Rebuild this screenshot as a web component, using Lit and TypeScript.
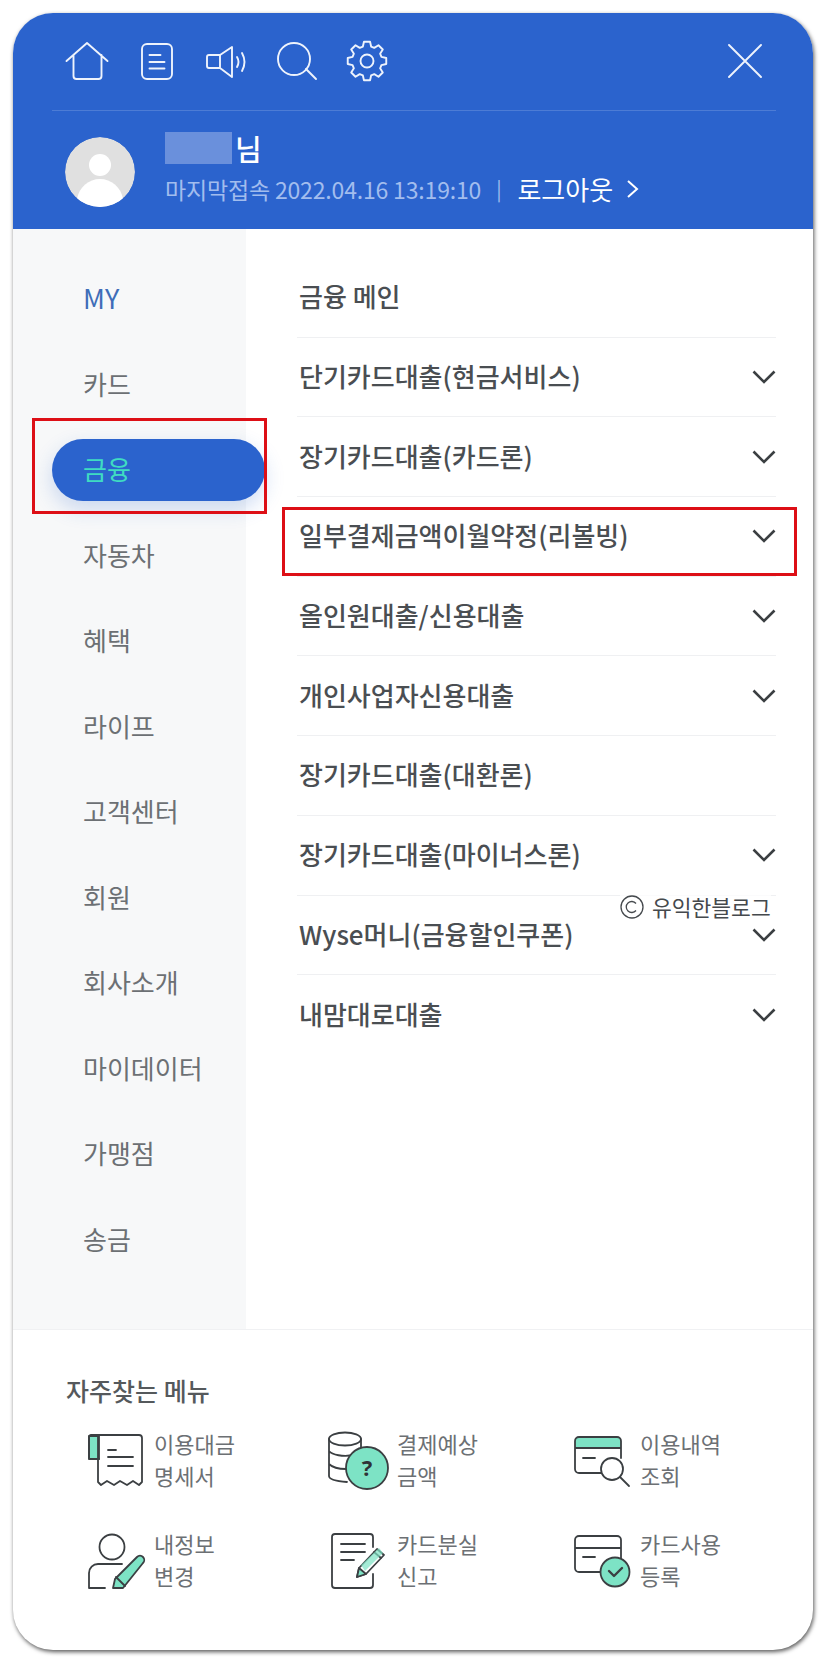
import { LitElement, html, css, svg } from "lit";
import { customElement } from "lit/decorators.js";

const gearPath = (() => {
  const cx = 22, cy = 22, pts: string[] = [];
  for (let i = 0; i < 8; i++) {
    const a = (i * 45 - 90) * Math.PI / 180;
    const p = (r: number, d: number) => {
      const t = a + d * Math.PI / 180;
      return `${(cx + r * Math.cos(t)).toFixed(2)} ${(cy + r * Math.sin(t)).toFixed(2)}`;
    };
    pts.push(p(15, -16), p(19.5, -9), p(19.5, 9), p(15, 16));
  }
  return "M" + pts.join("L") + "Z";
})();

const GREEN = "#7de3c5";

const quick = [
  { l: ["이용대금", "명세서"], i: svg`
    <rect x="1" y="7" width="10" height="23" fill="${GREEN}"/>
    <path d="M11 30H2a1 1 0 0 1-1-1V8a2 2 0 0 1 2-2h48a3 3 0 0 1 3 3v44l-3 3-6-4-6 4-7-4-6 4-7-4-6 4-3-3V8a2 2 0 0 0-2-2"/>
    <path d="M20 21h8M20 28h25M20 37h25"/>` },
  { l: ["결제예상", "금액"], i: svg`
    <ellipse cx="14" cy="10" rx="16" ry="6.5"/>
    <path d="M-2 10v37c0 3 5 5 18 6M30 10v14M-2 22c3 4 14 6 25 4M-2 35c3 3 10 5 17 5"/>
    <circle cx="36" cy="39" r="21" fill="${GREEN}"/>
    <text x="36" y="47" text-anchor="middle" class="q">?</text>` },
  { l: ["이용내역", "조회"], i: svg`
    <path d="M1 19V12a4 4 0 0 1 4-4h38a4 4 0 0 1 4 4v7z" fill="${GREEN}" stroke="none"/>
    <path d="M27 44H5a4 4 0 0 1-4-4V12a4 4 0 0 1 4-4h38a4 4 0 0 1 4 4v17M1 19h46M9 29h12"/>
    <circle cx="38" cy="40" r="11" fill="#fff"/>
    <path d="M46 48l9 9"/>` },
  { l: ["내정보", "변경"], i: svg`
    <circle cx="24" cy="18" r="12.5"/>
    <path d="M17 59H1V44a9 9 0 0 1 9-9h24"/>
    <path d="M27 50L49 28a4 4 0 0 1 6 6L35 59H25z" fill="${GREEN}"/>
    <path d="M28 48l9 9"/>` },
  { l: ["카드분실", "신고"], i: svg`
    <path d="M42 18V8a3 3 0 0 0-3-3H4a3 3 0 0 0-3 3v48a3 3 0 0 0 3 3h35a3 3 0 0 0 3-3V45"/>
    <path d="M10 15h24M10 23h24M10 31h13"/>
    <path d="M26 48l2-9 18-19 7 6-18 19z" fill="#fff"/>
    <path d="M43 23l7 6" />
    <path d="M28 39l7 6L26 48z" fill="${GREEN}"/>
    <path d="M30 36l18-17 4 5-18 18z" fill="${GREEN}" stroke="none" opacity=".7"/>` },
  { l: ["카드사용", "등록"], i: svg`
    <path d="M27 43H5a4 4 0 0 1-4-4V11a4 4 0 0 1 4-4h38a4 4 0 0 1 4 4v19M1 19h46M9 28h12"/>
    <circle cx="41" cy="43" r="14.5" fill="${GREEN}"/>
    <path d="M35 42l5 5 8-8" stroke-width="2.4"/>` },
];

const side = ["MY", "카드", "금융", "자동차", "혜택", "라이프", "고객센터", "회원", "회사소개", "마이데이터", "가맹점", "송금"];
const rows: [string, boolean][] = [
  ["금융 메인", false],
  ["단기카드대출(현금서비스)", true],
  ["장기카드대출(카드론)", true],
  ["일부결제금액이월약정(리볼빙)", true],
  ["올인원대출/신용대출", true],
  ["개인사업자신용대출", true],
  ["장기카드대출(대환론)", false],
  ["장기카드대출(마이너스론)", true],
  ["Wyse머니(금융할인쿠폰)", true],
  ["내맘대로대출", true],
];

@customElement("app-root")
export class AppRoot extends LitElement {
  static styles = css`
    :host { display: block; position: relative; width: 828px; height: 1665px; background: #fff; box-sizing: border-box; padding: 13px 15px 15px 13px;
      font-family: "Noto Sans CJK KR", "Noto Sans", sans-serif; overflow: hidden; }
    .card { width: 800px; height: 1637px; border-radius: 40px; background: #fff; overflow: hidden; display: flex; flex-direction: column;
      box-shadow: 1px 2px 4px rgba(0,0,0,.65); }
    .head { height: 216px; flex: none; background: #2b63cd; box-sizing: border-box; padding: 26px 37px 0 39px; color: #fff; }
    .tools { display: flex; align-items: center; height: 44px; padding-left: 12.5px; gap: 26px; }
    .tools svg { width: 44px; height: 44px; fill: none; stroke: #eef3fc; stroke-width: 1.9; stroke-linecap: round; stroke-linejoin: round; flex: none; }
    .tools .x { margin-left: auto; margin-right: 14px; width: 34px; height: 34px; }
    .rule { height: 1px; background: rgba(255,255,255,.16); margin-top: 27px; }
    .user { display: flex; align-items: center; margin-top: 26px; padding-left: 13px; gap: 30px; }
    .avatar { width: 70px; height: 70px; flex: none; border-radius: 50%; }
    .who { display: flex; flex-direction: column; margin-top: -11px; }
    .name { display: flex; align-items: center; height: 34px; margin-top: 4px; gap: 3px; font-size: 29px; font-weight: 500; line-height: 34px; }
    .blur { width: 67px; height: 32px; background: #6a90dc; }
    .meta { display: flex; align-items: center; height: 36px; margin-top: 6px; font-size: 23px; color: #a2bdee; white-space: nowrap; letter-spacing: -.17px; }
    .bar { margin: 0 16px 0 15px; font-size: 20px; }
    .out { color: #fff; font-size: 26px; letter-spacing: 0; }
    .meta svg { width: 14px; height: 22px; margin-left: 13px; fill: none; stroke: #fff; stroke-width: 2; }
    .body { height: 1100px; flex: none; display: flex; }
    .side { width: 233px; flex: none; background: #f7f8f9; padding-top: 27px; box-sizing: border-box; }
    .it { height: 85.5px; display: flex; align-items: center; padding-left: 70px; font-size: 26px; color: #6c7074; position: relative; z-index: 1; }
    .it span { margin-top: -2px; }
    .it.my { color: #3f6db8; font-size: 27px; }
    .it.on span { display: flex; align-items: center; box-sizing: border-box; height: 62px; width: 213px; margin: 0 0 0 -31px; padding: 0 0 2px 31px; border-radius: 31px; flex: none;
      background: #2b63cd; color: #3fdcc2; box-shadow: 0 8px 20px rgba(43,99,205,.22); }
    .main { flex: 1; padding: 29px 37px 0 51px; }
    .row { height: 79.7px; box-sizing: border-box; display: flex; align-items: center; justify-content: space-between; border-bottom: 1px solid #eff0f2; padding-left: 2px;
      font-size: 26px; font-weight: 500; color: #4a4e52; white-space: nowrap; }
    .row span { margin-top: -3px; }
    .row:last-child { border-bottom: none; }
    .row svg { width: 24px; height: 14px; fill: none; stroke: #3b3f42; stroke-width: 2.6; flex: none; }
    .foot { flex: 1; border-top: 1px solid #f0f1f3; box-sizing: border-box; padding: 42.5px 0 0 53px; }
    .title { font-size: 25px; font-weight: 500; line-height: 34px; color: #55595c; }
    .grid { display: grid; grid-template-columns: repeat(3, 243px); row-gap: 36px; margin: 22.5px 0 0 22px; }
    .q-item { display: flex; height: 64px; }
    .q-item svg { width: 66px; height: 64px; overflow: visible; flex: none; fill: none; stroke: #3b3f42; stroke-width: 1.8; stroke-linecap: round; stroke-linejoin: round; }
    .q-item .q { font: 700 22px "Noto Sans", sans-serif; fill: #2f3336; stroke: none; }
    .lab { font-size: 22px; line-height: 32px; margin: -2px 0 0 0; color: #6c7074; white-space: nowrap; }
    .box { position: absolute; border: 3.5px solid #dd0f16; box-sizing: border-box; z-index: 3; pointer-events: none; }
    .b1 { left: 32px; top: 418px; width: 235px; height: 96px; }
    .b2 { left: 282px; top: 507px; width: 515px; height: 69px; }
    .wm { position: absolute; left: 620px; top: 891px; display: flex; align-items: center; gap: 8px; z-index: 3; font-size: 21.5px; line-height: 32px; color: #45494d; white-space: nowrap; background: rgba(255,255,255,.75); }
    .wm svg { width: 24px; height: 24px; fill: none; stroke: #45494d; stroke-width: 1.3; }
  `;

  render() {
    return html`
      <div class="card">
        <div class="head">
          <div class="tools">
            <svg viewBox="0 0 44 44"><path d="M1.5 22L22 4l20.5 18M8.5 16v21a3 3 0 0 0 3 3h22a3 3 0 0 0 3-3V16"/></svg>
            <svg viewBox="0 0 44 44"><rect x="7" y="5" width="30" height="35" rx="5"/><path d="M14.5 16h11M14.5 23h15M14.5 29.500h15"/></svg>
            <svg viewBox="0 0 44 44"><path d="M15 16H4a2 2 0 0 0-2 2v9a2 2 0 0 0 2 2h11zM15 16l12-8v30l-12-9"/><path d="M32 18q3 5 0 10M37 14q5 9 0 18"/></svg>
            <svg viewBox="0 0 44 44"><circle cx="19" cy="20" r="16"/><path d="M31 30l10 10"/></svg>
            <svg viewBox="0 0 44 44"><path d="${gearPath}"/><circle cx="22" cy="22" r="6.5"/></svg>
            <svg class="x" viewBox="0 0 34 34"><path d="M1 1l32 32M33 1L1 33"/></svg>
          </div>
          <div class="rule"></div>
          <div class="user">
            <svg class="avatar" viewBox="0 0 70 70"><circle cx="35" cy="35" r="35" fill="#e0e0e0"/><circle cx="35" cy="28" r="11" fill="#fff"/><path d="M12 62c2-12 12-20 23-20s21 8 23 20a35 35 0 0 1-46 0z" fill="#fff"/></svg>
            <div class="who">
              <div class="name"><span class="blur"></span><span>님</span></div>
              <div class="meta">마지막접속 2022.04.16 13:19:10<span class="bar">|</span><span class="out">로그아웃</span>
                <svg viewBox="0 0 14 22"><path d="M2 3l9 8-9 8"/></svg></div>
            </div>
          </div>
        </div>
        <div class="body">
          <div class="side">
            ${side.map((s, i) => html`<div class="it ${i === 0 ? "my" : ""} ${i === 2 ? "on" : ""}"><span>${s}</span></div>`)}
          </div>
          <div class="main">
            ${rows.map(([t, c]) => html`<div class="row"><span>${t}</span>${c ? html`<svg viewBox="0 0 24 14"><path d="M1.500 1.500L12 12 22.500 1.500"/></svg>` : ""}</div>`)}
          </div>
        </div>
        <div class="foot">
          <div class="title">자주찾는 메뉴</div>
          <div class="grid">
            ${quick.map(q => html`<div class="q-item"><svg viewBox="0 0 66 64">${q.i}</svg><div class="lab">${q.l[0]}<br>${q.l[1]}</div></div>`)}
          </div>
        </div>
      </div>
      <div class="box b1"></div>
      <div class="box b2"></div>
      <div class="wm"><svg viewBox="0 0 24 24"><circle cx="12" cy="12" r="11"/><path d="M16 8.500a5.500 5.500 0 1 0 0 7"/></svg><span>유익한블로그</span></div>
    `;
  }
}
